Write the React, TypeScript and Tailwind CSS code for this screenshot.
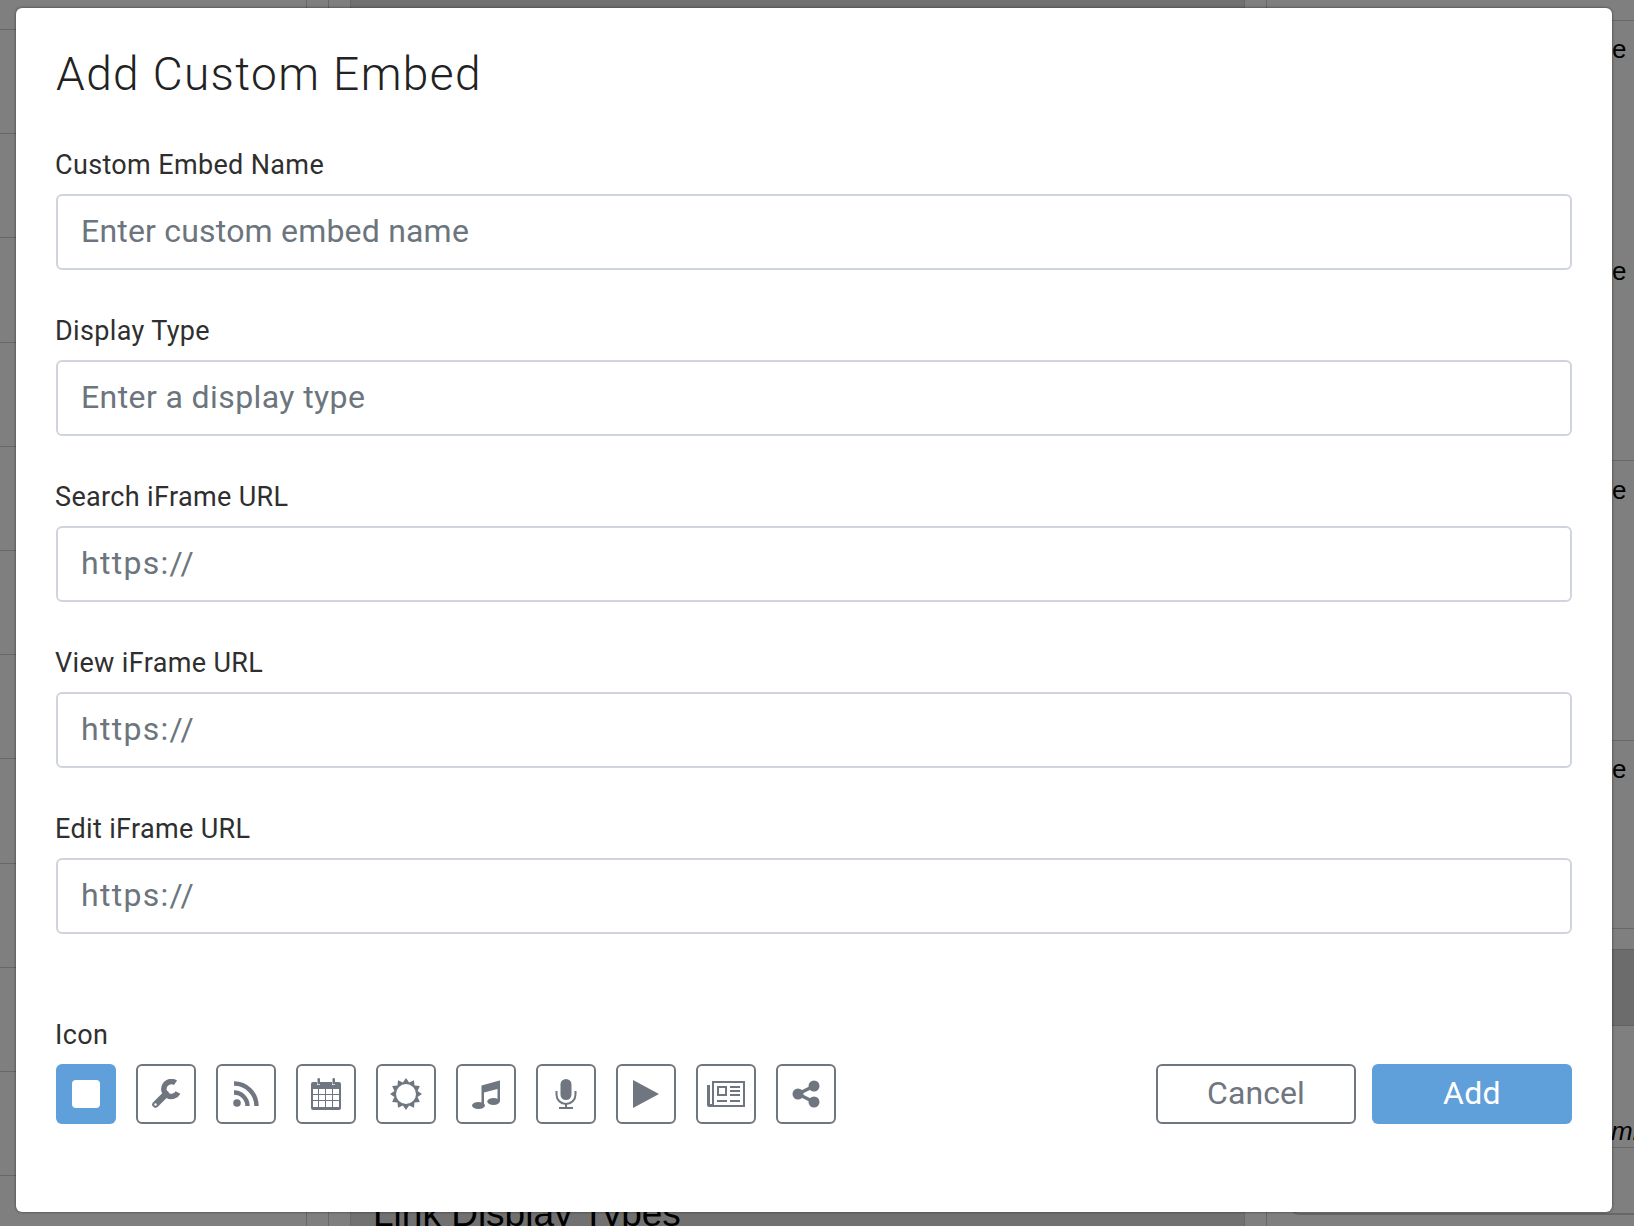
const ICON = "#6f7680";

const fields = [
    { label: "Custom Embed Name", placeholder: "Enter custom embed name", spacing: "tracking-[0.2px]" },
    { label: "Display Type", placeholder: "Enter a display type", spacing: "tracking-[0.4px]" },
    { label: "Search iFrame URL", placeholder: "https://", spacing: "tracking-[1.3px]" },
    { label: "View iFrame URL", placeholder: "https://", spacing: "tracking-[1.3px]" },
    { label: "Edit iFrame URL", placeholder: "https://", spacing: "tracking-[1.3px]" },
];

// 12 toothed ring for the sun icon
const sunPoints = Array.from({ length: 24 })
    .map((_, i) => {
        const r = i % 2 === 0 ? 16 : 12;
        const a = (i * Math.PI) / 12 - Math.PI / 2;
        return `${(16 + r * Math.cos(a)).toFixed(2)},${(16 + r * Math.sin(a)).toFixed(2)}`;
    })
    .join(" ");

const WrenchIcon = () => (
    <svg viewBox="0 0 30 30" className="w-[30px] h-[30px]">
        <path d="M24.5 3.8A7.5 7.5 0 1 0 27 13.5" fill="none" stroke={ICON} strokeWidth="5.5" />
        <path d="M4.5 25.5L15 15" stroke={ICON} strokeWidth="6.5" strokeLinecap="round" />
        <circle cx="4.5" cy="25.5" r="1.2" fill="#fff" />
    </svg>
);

const RssIcon = () => (
    <svg viewBox="0 0 26 26" className="w-[26px] h-[26px]" fill="none" stroke={ICON} strokeWidth="4.4">
        <circle cx="4" cy="22" r="3.8" fill={ICON} stroke="none" />
        <path d="M1 11.5A13.5 13.5 0 0 1 14.5 25" />
        <path d="M1 2.5A22.5 22.5 0 0 1 23.5 25" />
    </svg>
);

const CalendarIcon = () => (
    <svg viewBox="0 0 30 32" className="w-[30px] h-[32px]" fill={ICON}>
        <path fillRule="evenodd" d="M2 4h4v3h3V4h12v3h3V4h4a2 2 0 0 1 2 2v24a2 2 0 0 1-2 2H2a2 2 0 0 1-2-2V6a2 2 0 0 1 2-2zM2 11v5h5v-5zM8 11v5h6v-5zM15 11v5h6v-5zM22 11v5h6v-5zM2 17v5h5v-5zM8 17v5h6v-5zM15 17v5h6v-5zM22 17v5h6v-5zM2 23v6h5v-6zM8 23v6h6v-6zM15 23v6h6v-6zM22 23v6h6v-6z" />
        <rect x="6.5" y="0" width="2.5" height="6.5" rx="1.2" />
        <rect x="21.5" y="0" width="2.5" height="6.5" rx="1.2" />
    </svg>
);

const SunIcon = () => (
    <svg viewBox="0 0 32 32" className="w-[32px] h-[32px]" fill={ICON}>
        <polygon points={sunPoints} />
        <circle cx="16" cy="16" r="10" fill="#fff" />
    </svg>
);

const MusicIcon = () => (
    <svg viewBox="0 0 28 30" className="w-[28px] h-[30px]" fill={ICON}>
        <ellipse cx="6.5" cy="26.5" rx="6.5" ry="3.5" />
        <ellipse cx="21.5" cy="22.5" rx="6.2" ry="3.4" />
        <path d="M9.5 6.5L27.5 1.5a.5.5 0 0 1 .5.5V22.5H25.5V10L12 13.5V26.5H9.5z" />
    </svg>
);

const MicIcon = () => (
    <svg viewBox="0 0 22 30" className="w-[22px] h-[30px]" fill="none" stroke={ICON} strokeWidth="2">
        <rect x="5.5" y="0" width="11" height="21" rx="5.5" fill={ICON} stroke="none" />
        <path d="M1.5 12v3.5a9.5 9.5 0 0 0 19 0V12" />
        <path d="M11 25v4M4 29h14" />
    </svg>
);

const PlayIcon = () => (
    <svg viewBox="0 0 26 28" className="w-[26px] h-[28px]" fill={ICON}>
        <path d="M0 0l26 14L0 28z" />
    </svg>
);

const NewsIcon = () => (
    <svg viewBox="0 0 38 26" className="w-[38px] h-[26px]" fill={ICON}>
        <path fillRule="evenodd" d="M5 0h33v26H2a2 2 0 0 1-2-2V4h3v19h2zM7 2v22h29V2z" />
        <path fillRule="evenodd" d="M10 5h10v10H10zM12 7v6h6V7z" />
        <path d="M23 5h10v2H23zM23 9h10v2H23zM23 13h10v2H23zM10 19h10v2H10zM23 19h10v2H23z" />
    </svg>
);

const ShareIcon = () => (
    <svg viewBox="0 0 28 28" className="w-[28px] h-[28px]" fill={ICON} stroke={ICON}>
        <path d="M6 14L22 6M6 14L22 22" strokeWidth="3.5" fill="none" />
        <circle cx="6" cy="14" r="5.5" stroke="none" />
        <circle cx="22" cy="6" r="5.5" stroke="none" />
        <circle cx="22" cy="22" r="5.5" stroke="none" />
    </svg>
);

const icons = [
    <WrenchIcon key="wrench" />,
    <RssIcon key="rss" />,
    <CalendarIcon key="calendar" />,
    <SunIcon key="sun" />,
    <MusicIcon key="music" />,
    <MicIcon key="mic" />,
    <PlayIcon key="play" />,
    <NewsIcon key="news" />,
    <ShareIcon key="share" />,
];

export default function App() {
    return (
        <div className="relative w-[1634px] h-[1226px] overflow-hidden bg-white font-['Roboto',sans-serif]">
            {/* Page behind the dialog */}
            <div className="flex h-full">
                <div className="w-[307px] border-r border-[#cfcfcf] pt-[29px] shrink-0">
                    {Array.from({ length: 12 }).map((_, i) => (
                        <div key={i} className="h-[104.2px] border-t border-[#cfcfcf]" />
                    ))}
                </div>
                <div className="w-[22px] border-r border-[#cfcfcf] shrink-0" />
                <div className="w-[22px] border-r border-[#cfcfcf] shrink-0" />
                <div className="w-[894px] border-r border-[#cfcfcf] bg-[#e2e2e2] shrink-0 pt-[1192px] pl-[22px] text-[37px] leading-[44px] text-black font-['Liberation_Sans',sans-serif]">
                    Link Display Types
                </div>
                <div className="w-[22px] border-r border-[#cfcfcf] shrink-0" />
                <div className="flex-1 text-black text-[26px] leading-[30px] font-['Liberation_Sans',sans-serif]">
                    <div className="h-[21px] border-b border-[#cfcfcf]" />
                    <div className="h-[440px] border-b border-[#cfcfcf] pl-[345px] pt-[13px]">
                        <div>e</div>
                        <div className="mt-[192px]">e</div>
                    </div>
                    <div className="h-[280px] border-b border-[#cfcfcf] pl-[345px] pt-[14px]">e</div>
                    <div className="pl-[345px] pt-[13px] h-[188px] border-b border-[#cfcfcf]">e</div>
                    <div className="h-[20px]" />
                    <div className="h-[77px] bg-[#d8d8d8] border-y border-[#c4c4c4]" />
                    <div className="h-[122px] border-b border-[#cfcfcf] pt-[90px] pl-[344px] italic">mi</div>
                    <div className="h-[67px] ml-[24px] border-b-2 border-l-2 border-[#cfcfcf] rounded-bl-[8px]" />
                </div>
            </div>

            {/* Backdrop */}
            <div className="absolute inset-0 bg-black/50" />

            {/* Dialog */}
            <div className="absolute left-[16px] top-[8px] w-[1596px] h-[1204px] bg-white rounded-[6px] px-[40px] pt-[39px] shadow-[0_0_3px_rgba(0,0,0,0.55)]">
                <h1 className="text-[46px] leading-[54px] font-light text-[#222222] tracking-[1.4px]">Add Custom Embed</h1>
                <div className="mt-[48px] flex flex-col gap-[45px]">
                    {fields.map((f) => (
                        <div key={f.label}>
                            <div className="-ml-[1px] text-[27px] leading-[32px] text-[#2f2f2f] tracking-[0.35px] mb-[13px]">{f.label}</div>
                            <div className={`h-[76px] border-2 border-[#d0d5dd] rounded-[6px] pl-[23px] pr-[24px] pb-[2px] flex items-center text-[32px] text-[#6c757d] ${f.spacing}`}>
                                {f.placeholder}
                            </div>
                        </div>
                    ))}
                </div>
                <div className="-ml-[1px] mt-[85px] text-[27px] leading-[32px] text-[#2f2f2f] tracking-[0.4px]">Icon</div>
                <div className="mt-[13px] flex items-center justify-between">
                    <div className="flex gap-[20px]">
                        <div className="w-[60px] h-[60px] rounded-[6px] bg-[#5f9fda] flex items-center justify-center">
                            <div className="w-[28px] h-[28px] rounded-[4px] bg-white" />
                        </div>
                        {icons.map((icon, i) => (
                            <div key={i} className="w-[60px] h-[60px] rounded-[6px] border-2 border-[#6f7680] flex items-center justify-center">
                                {icon}
                            </div>
                        ))}
                    </div>
                    <div className="flex gap-[16px]">
                        <div className="w-[200px] h-[60px] rounded-[6px] border-2 border-[#6f7680] pb-[2px] flex items-center justify-center text-[32px] text-[#6f7680] tracking-[0.1px]">Cancel</div>
                        <div className="w-[200px] h-[60px] rounded-[6px] bg-[#5f9fda] pb-[2px] flex items-center justify-center text-[32px] text-white tracking-[0.3px]">Add</div>
                    </div>
                </div>
            </div>
        </div>
    );
}
